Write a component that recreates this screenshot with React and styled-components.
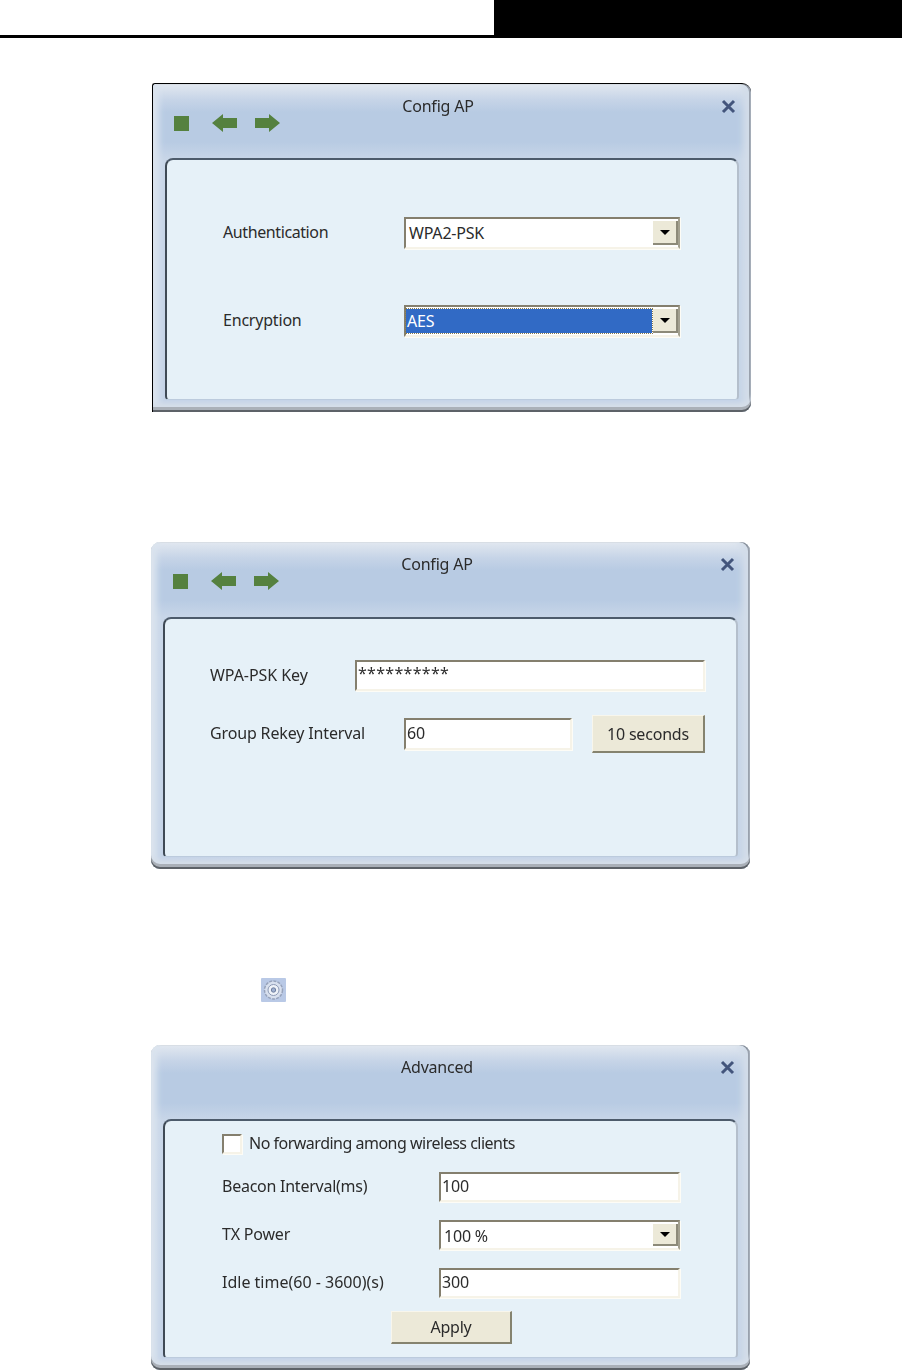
import React from 'react';
import styled, { createGlobalStyle } from 'styled-components';

const GlobalStyle = createGlobalStyle`
  html, body {
    margin: 0;
    padding: 0;
    background: #fff;
  }
  body {
    font-family: "Noto Sans", "Open Sans", sans-serif;
    font-size: 16px;
    color: #2b2b2b;
  }
`;

const Page = styled.div`
  width: 902px;
  height: 1371px;
  overflow: hidden;
  display: flex;
  flex-direction: column;
`;

const Header = styled.div`
  height: 35px;
  flex: none;
  display: flex;
  border-bottom: 3px solid #000;
`;

const HeaderBlack = styled.div`
  margin-left: 494px;
  flex: 1;
  background: #000;
`;

const Dialog = styled.section`
  position: relative;
  flex: none;
  box-sizing: border-box;
  width: 599px;
  height: ${(p) => p.$height}px;
  margin-top: ${(p) => p.$top}px;
  margin-left: ${(p) => p.$left}px;
  padding: 0 12px 12px 12px;
  display: flex;
  flex-direction: column;
  border-radius: 9px;
  filter: blur(0.35px);
  background: linear-gradient(
    #e2e8f0 0,
    #c6d4e7 16px,
    #b8cbe3 28px,
    #b8cbe3 58px,
    #c8d6e8 75px,
    #c4d3e7 100%
  );
  box-shadow: inset 0 -2px 0 #5d6268, inset 0 -5px 0 #aab0b8, inset 0 -9px 4px #d5dee9,
    inset -2px 0 0 #858d98, inset 2px 0 1px #dde5ee, inset 0 1px 0 #d7dde4,
    inset 10px 0 6px -4px #dbe4ef, inset -12px 0 6px -4px #d3dde9;
  ${(p) =>
    p.$framed &&
    `
    border-top: 1px solid #000;
    border-left: 1px solid #000;
    border-top-left-radius: 3px;
    border-bottom-left-radius: 0;
  `}
`;

const TitleBar = styled.header`
  flex: none;
  height: ${(p) => p.$height}px;
  box-sizing: border-box;
  padding: 11px 37px 0 ${(p) => (p.$framed ? 9 : 10)}px;
`;

const Title = styled.h2`
  margin: 0;
  height: 22px;
  font-size: 16px;
  font-weight: 400;
  line-height: 22px;
  text-align: center;
  letter-spacing: -0.2px;
`;

const Toolbar = styled.div`
  display: flex;
  align-items: center;
  height: 18px;
  margin-top: -3px;
`;

const StopIcon = styled.svg`
  width: 15px;
  height: 15px;
  margin-right: 23px;
`;

const ArrowIcon = styled.svg`
  width: 25px;
  height: 18px;
  margin-right: 18px;
`;

const CloseButton = styled.svg`
  position: absolute;
  top: 15px;
  right: 15px;
  width: 15px;
  height: 15px;
`;

const Panel = styled.div`
  flex: 1;
  box-sizing: border-box;
  display: flex;
  flex-direction: column;
  background: #e6f1f8;
  border-top: 2px solid #4d5b6b;
  border-left: 2px solid #3f4a55;
  border-right: 2px solid #b4bfcc;
  border-bottom: 1px solid #bccbdd;
  border-radius: 8px 8px 4px 4px;
  padding: ${(p) => p.$pad};
`;

const Row = styled.div`
  display: flex;
  align-items: center;
  margin-top: ${(p) => p.$top || 0}px;
  height: ${(p) => (p.$height ? `${p.$height}px` : 'auto')};
`;

const Label = styled.label`
  flex: none;
  width: ${(p) => (p.$width ? `${p.$width}px` : 'auto')};
  letter-spacing: ${(p) => p.$track ?? -0.2}px;
  position: relative;
  top: -1px;
`;

const sunken = `
  box-sizing: border-box;
  background: #fff;
  border-style: solid;
  border-width: 2px;
  border-color: #847f6e #f6f3e8 #f6f3e8 #847f6e;
  box-shadow: 1px 1px 0 #fdfcf6;
`;

const Input = styled.div`
  ${sunken}
  width: ${(p) => p.$width}px;
  height: ${(p) => p.$height || 32}px;
  padding: 0 1px;
  line-height: ${(p) => p.$line}px;
  letter-spacing: ${(p) => p.$track ?? -0.2}px;
`;

const Select = styled.div`
  ${sunken}
  width: ${(p) => p.$width}px;
  height: ${(p) => p.$height || 32}px;
  display: flex;
  align-items: stretch;
  border-color: #847f6e #a3a08f #f6f3e8 #847f6e;
`;

const SelectValue = styled.div`
  flex: 1;
  box-sizing: border-box;
  margin: ${(p) => (p.$focused ? '2px 1px 2px 0' : '0')};
  padding-left: ${(p) => (p.$focused ? '1px' : '3px')};
  line-height: ${(p) => (p.$focused ? '24px' : '28px')};
  letter-spacing: -0.2px;
  background: ${(p) => (p.$focused ? '#316ac5' : '#fff')};
  color: ${(p) => (p.$focused ? '#fff' : 'inherit')};
  outline: ${(p) => (p.$focused ? '1px dotted #8a7a4a' : 'none')};
`;

const SelectArrow = styled.div`
  flex: none;
  width: 25px;
  margin: 2px 0;
  display: flex;
  align-items: center;
  justify-content: center;
  background: #ece9d8;
  border-right: 2px solid #8d8a79;
  border-bottom: 2px solid #8d8a79;
  box-sizing: border-box;
  &::after {
    content: '';
    border-style: solid;
    border-width: 5px 5px 0;
    border-color: #000 transparent transparent;
  }
`;

const Button = styled.button`
  box-sizing: border-box;
  flex: none;
  width: ${(p) => p.$width}px;
  height: ${(p) => p.$height}px;
  margin-left: ${(p) => p.$left}px;
  padding: 0;
  font: inherit;
  color: inherit;
  letter-spacing: -0.2px;
  background: #ece9d8;
  border-style: solid;
  border-width: 1px 2px 2px 1px;
  border-color: #f8f6ec #85836f #85836f #f8f6ec;
`;

const Checkbox = styled.span`
  ${sunken}
  flex: none;
  width: 20px;
  height: 20px;
  margin-right: 7px;
`;

const GearRow = styled.div`
  flex: none;
  height: 24px;
  margin-top: 109px;
  padding-left: 261px;
`;

const GearBox = styled.svg`
  display: block;
  width: 25px;
  height: 24px;
  filter: blur(0.4px);
`;

const GREEN = '#55813f';

const Stop = () => (
  <StopIcon viewBox="0 0 15 15">
    <rect width="15" height="15" fill={GREEN} />
  </StopIcon>
);

const Arrow = ({ flip }) => (
  <ArrowIcon viewBox="0 0 25 18">
    <path
      d={flip ? 'M25 9 14 0v4h-14v10h14V18z' : 'M0 9 11 0v4h14v10H11V18z'}
      fill={GREEN}
    />
  </ArrowIcon>
);

const Close = () => (
  <CloseButton viewBox="0 0 15 15">
    <path d="M2 2 13 13M13 2 2 13" stroke="#43557c" strokeWidth="3" />
  </CloseButton>
);

const GearIcon = () => (
  <GearBox viewBox="0 0 25 24">
    <rect width="25" height="24" rx="1" fill="#b9c9e6" />
    <circle cx="12.5" cy="12" r="9" fill="#d8e0ee" stroke="#97a3bb" strokeWidth="1.5" strokeDasharray="3 1.2" />
    <circle cx="12.5" cy="12" r="5.5" fill="#eef2f8" stroke="#8d9ab6" />
    <circle cx="12.5" cy="12" r="2.2" fill="#9fb0d0" stroke="#6f7f9f" />
  </GearBox>
);

const App = () => (
  <Page>
    <GlobalStyle />
    <Header>
      <HeaderBlack />
    </Header>

    <Dialog $height={329} $top={45} $left={152} $framed>
      <TitleBar $height={74} $framed>
        <Title>Config AP</Title>
        <Toolbar>
          <Stop />
          <Arrow />
          <Arrow flip />
        </Toolbar>
      </TitleBar>
      <Close />
      <Panel $pad="57px 0 0 56px">
        <Row>
          <Label $width={181} $track={-0.4}>Authentication</Label>
          <Select $width={276}>
            <SelectValue>WPA2-PSK</SelectValue>
            <SelectArrow />
          </Select>
        </Row>
        <Row $top={56}>
          <Label $width={181}>Encryption</Label>
          <Select $width={276}>
            <SelectValue $focused>AES</SelectValue>
            <SelectArrow />
          </Select>
        </Row>
      </Panel>
    </Dialog>

    <Dialog $height={327} $top={130} $left={151}>
      <TitleBar $height={75}>
        <Title>Config AP</Title>
        <Toolbar>
          <Stop />
          <Arrow />
          <Arrow flip />
        </Toolbar>
      </TitleBar>
      <Close />
      <Panel $pad="41px 0 0 45px">
        <Row>
          <Label $width={145} $track={-0.05}>WPA-PSK Key</Label>
          <Input $width={350} $height={31} $line={22} $track={0.3}>**********</Input>
        </Row>
        <Row $top={24}>
          <Label $width={194} $track={-0.15}>Group Rekey Interval</Label>
          <Input $width={168} $line={27}>60</Input>
          <Button $width={113} $height={38} $left={20}>10 seconds</Button>
        </Row>
      </Panel>
    </Dialog>

    <GearRow>
      <GearIcon />
    </GearRow>

    <Dialog $height={325} $top={43} $left={151}>
      <TitleBar $height={74}>
        <Title>Advanced</Title>
      </TitleBar>
      <Close />
      <Panel $pad="13px 0 0 57px">
        <Row $height={20}>
          <Checkbox />
          <Label as="span" $track={-0.5}>No forwarding among wireless clients</Label>
        </Row>
        <Row $top={18}>
          <Label $width={217} $track={-0.25}>Beacon Interval(ms)</Label>
          <Input $width={241} $height={30} $line={24}>100</Input>
        </Row>
        <Row $top={18}>
          <Label $width={217}>TX Power</Label>
          <Select $width={241} $height={30}>
            <SelectValue>100 %</SelectValue>
            <SelectArrow />
          </Select>
        </Row>
        <Row $top={18}>
          <Label $width={217} $track={0}>Idle time(60 - 3600)(s)</Label>
          <Input $width={241} $height={30} $line={24}>300</Input>
        </Row>
        <Row $top={13}>
          <Button $width={121} $height={33} $left={169}>Apply</Button>
        </Row>
      </Panel>
    </Dialog>
  </Page>
);

export default App;
